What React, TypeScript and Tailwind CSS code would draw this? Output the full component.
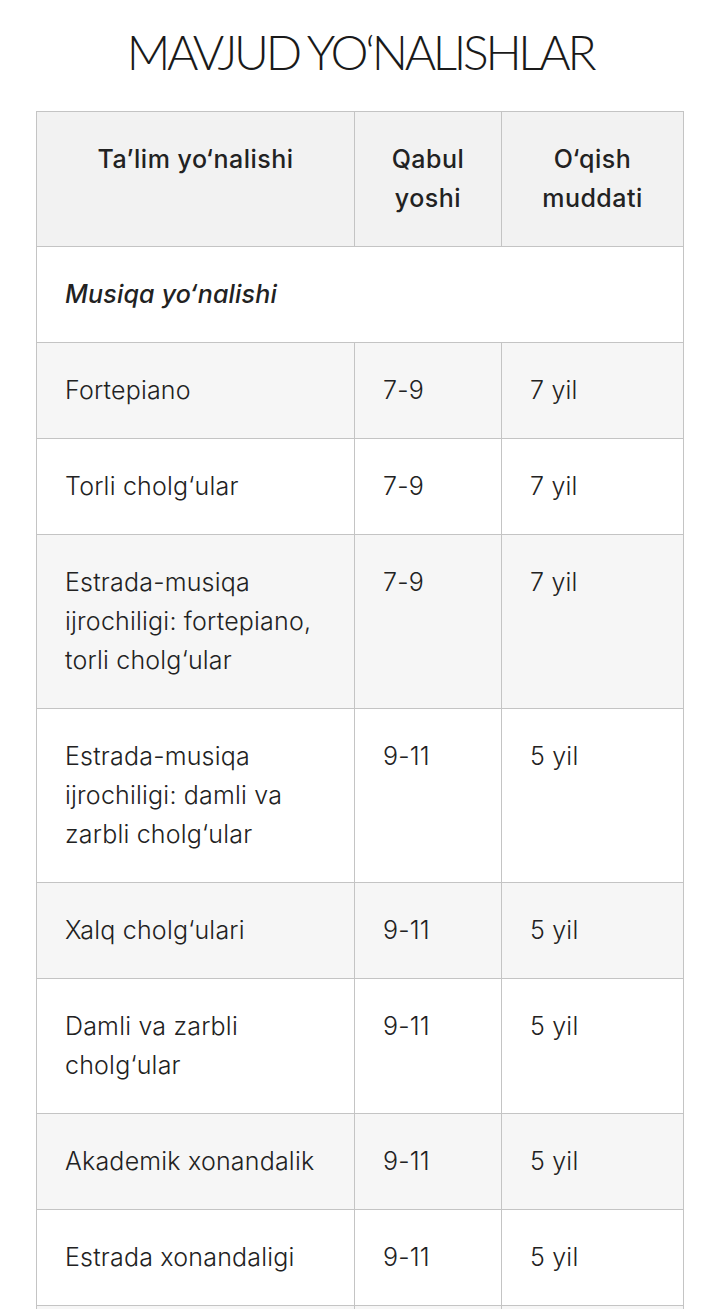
import React from "react";

type Row = { name: string[]; age: string; term: string };

const rows: Row[] = [
  { name: ["Fortepiano"], age: "7-9", term: "7 yil" },
  { name: ["Torli cholg‘ular"], age: "7-9", term: "7 yil" },
  { name: ["Estrada-musiqa", "ijrochiligi: fortepiano,", "torli cholg‘ular"], age: "7-9", term: "7 yil" },
  { name: ["Estrada-musiqa", "ijrochiligi: damli va", "zarbli cholg‘ular"], age: "9-11", term: "5 yil" },
  { name: ["Xalq cholg‘ulari"], age: "9-11", term: "5 yil" },
  { name: ["Damli va zarbli", "cholg‘ular"], age: "9-11", term: "5 yil" },
  { name: ["Akademik xonandalik"], age: "9-11", term: "5 yil" },
  { name: ["Estrada xonandaligi"], age: "9-11", term: "5 yil" },
  { name: ["\u00a0"], age: "\u00a0", term: "\u00a0" },
];

const cell = "border border-[#c4c4c4] px-[28px] py-[28px] align-top";

export default function App() {
  return (
    <div className="min-h-screen bg-white text-[#222] font-['Inter','Noto_Sans',sans-serif]">
      <h1 className="pt-[30px] pl-[16px] text-center text-[48px] leading-[44px] font-light tracking-[-3.3px] font-['Lato','DejaVu_Sans',sans-serif] text-[#1a1a1a]">
        MAVJUD YO‘NALISHLAR
      </h1>
      <table className="mt-[37px] ml-[36px] w-[647px] border-collapse text-[25px] leading-[39px] tracking-[0.2px] table-fixed">
        <colgroup>
          <col className="w-[318px]" />
          <col className="w-[147px]" />
          <col className="w-[182px]" />
        </colgroup>
        <thead>
          <tr className="bg-[#f2f2f2]">
            <th className={`${cell} text-center font-[550] tracking-[0.5px]`}>Ta’lim yo‘nalishi</th>
            <th className={`${cell} text-center font-[550] tracking-[0.5px]`}>
              Qabul
              <br />
              yoshi
            </th>
            <th className={`${cell} text-center font-[550] tracking-[0.5px]`}>
              O‘qish
              <br />
              muddati
            </th>
          </tr>
        </thead>
        <tbody>
          <tr className="bg-white">
            <td colSpan={3} className={`${cell} italic font-[550]`}>
              Musiqa yo‘nalishi
            </td>
          </tr>
          {rows.map((r, i) => (
            <tr key={i} className={i % 2 === 0 ? "bg-[#f6f6f6]" : "bg-white"}>
              <td className={`${cell} font-light`}>
                {r.name.map((line, j) => (
                  <React.Fragment key={j}>
                    {j > 0 && <br />}
                    {line}
                  </React.Fragment>
                ))}
              </td>
              <td className={`${cell} font-light`}>{r.age}</td>
              <td className={`${cell} font-light`}>{r.term}</td>
            </tr>
          ))}
        </tbody>
      </table>
    </div>
  );
}
